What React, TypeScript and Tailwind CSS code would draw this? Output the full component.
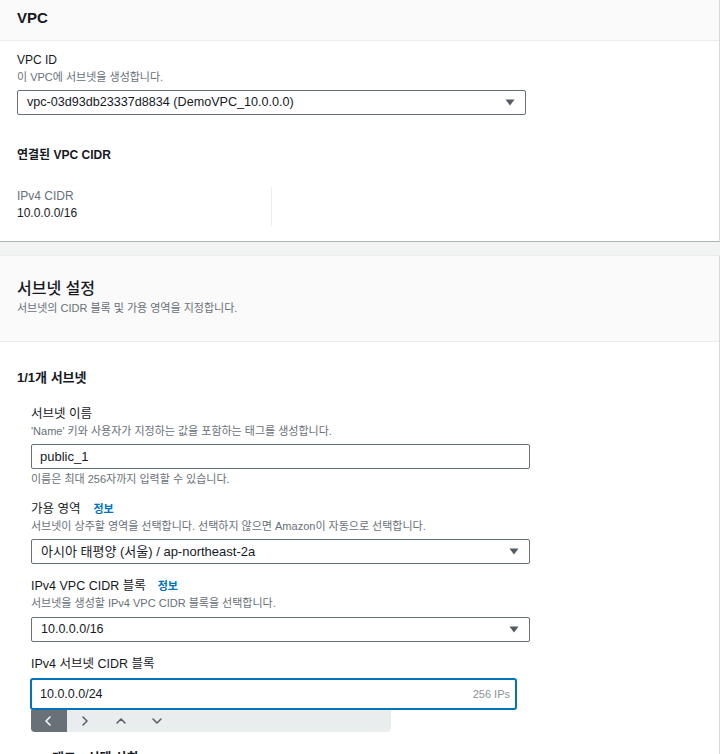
import React from "react";

const Caret = () => (
  <svg width="10" height="7" viewBox="0 0 10 7" className="shrink-0">
    <path d="M0.5 0.5 H9.5 L5 6.5 Z" fill="#545b64" />
  </svg>
);

const Chevron = ({ dir, color }: { dir: "l" | "r" | "u" | "d"; color: string }) => {
  const d =
    dir === "l"
      ? "M7 2 L3 6 L7 10"
      : dir === "r"
      ? "M4 2 L8 6 L4 10"
      : dir === "u"
      ? "M2 8 L6 4 L10 8"
      : "M2 4 L6 8 L10 4";
  return (
    <svg width="12" height="12" viewBox="0 0 12 12">
      <path d={d} fill="none" stroke={color} strokeWidth="1.5" strokeLinecap="round" strokeLinejoin="round" />
    </svg>
  );
};

const Select = ({ value, width, size = "text-[12.6px]" }: { value: string; width: string; size?: string }) => (
  <div
    className={`${width} h-[25px] border border-[#687078] rounded-[2px] bg-white flex items-center justify-between pl-[9px] pr-[10px]`}
  >
    <span className={`${size} text-[#16191f] leading-none`}>{value}</span>
    <Caret />
  </div>
);

export default function App() {
  return (
    <div
      className="w-[720px] h-[754px] overflow-hidden bg-[#f2f3f3] text-[#16191f]"
      style={{ fontFamily: '"Liberation Sans", "Noto Sans CJK KR", Arial, sans-serif' }}
    >
      {/* VPC panel */}
      <div className="bg-white border-r border-[#d5dbdb] border-b border-b-[#aab7b8] w-[720px]">
        <div className="h-[41px] bg-[#fafafa] border-b border-[#eaeded] px-[17px] pt-[8px]">
          <div className="text-[15px] font-bold leading-[20px]">VPC</div>
        </div>
        <div className="px-[17px] pt-[11px] pb-[15px]">
          <div className="text-[12px] leading-[17px]">VPC ID</div>
          <div className="text-[11px] leading-[17px] text-[#687078]">이 VPC에 서브넷을 생성합니다.</div>
          <div className="mt-[4px]">
            <Select value="vpc-03d93db23337d8834 (DemoVPC_10.0.0.0)" width="w-[509px]" />
          </div>
          <div className="mt-[31px] text-[12px] font-bold leading-[18px]">연결된 VPC CIDR</div>
          <div className="mt-[23px] flex">
            <div className="w-[255px] h-[39px] border-r border-[#eaeded] pt-[1px]">
              <div className="text-[12px] leading-[17px] text-[#687078]">IPv4 CIDR</div>
              <div className="text-[12px] leading-[17px]">10.0.0.0/16</div>
            </div>
          </div>
        </div>
      </div>

      {/* Subnet settings panel */}
      <div className="mt-[13px] bg-white border-t border-[#eaeded] border-r border-r-[#d5dbdb] w-[720px] h-[600px]">
        <div className="h-[86px] bg-[#fafafa] border-b border-[#eaeded] px-[17px] pt-[22px]">
          <div className="text-[16px] font-medium leading-[22px]">서브넷 설정</div>
          <div className="text-[11px] leading-[17px] text-[#687078]">서브넷의 CIDR 블록 및 가용 영역을 지정합니다.</div>
        </div>
        <div className="px-[17px] pt-[27px]">
          <div className="text-[13px] font-bold leading-[18px]">1/1개 서브넷</div>
          <div className="pl-[14px]">
            <div className="mt-[18px] text-[12.5px] leading-[18px]">서브넷 이름</div>
            <div className="text-[11px] leading-[17px] text-[#687078]">'Name' 키와 사용자가 지정하는 값을 포함하는 태그를 생성합니다.</div>
            <div className="mt-[4px] w-[499px] h-[25px] border border-[#687078] rounded-[2px] flex items-center pl-[8px]">
              <span className="text-[13px] leading-none">public_1</span>
            </div>
            <div className="mt-[2px] text-[11px] leading-[16px] text-[#687078]">이름은 최대 256자까지 입력할 수 있습니다.</div>

            <div className="mt-[14px] flex items-baseline text-[12.5px] leading-[17px]">
              <span>가용 영역</span>
              <span className="ml-[13px] text-[11px] font-bold text-[#0073bb]">정보</span>
            </div>
            <div className="text-[11px] leading-[16px] text-[#687078]">
              서브넷이 상주할 영역을 선택합니다. 선택하지 않으면 Amazon이 자동으로 선택합니다.
            </div>
            <div className="mt-[5px]">
              <Select value="아시아 태평양 (서울) / ap-northeast-2a" width="w-[499px]" size="text-[13px]" />
            </div>

            <div className="mt-[14px] flex items-baseline text-[12.5px] leading-[17px]">
              <span>IPv4 VPC CIDR 블록</span>
              <span className="ml-[12px] text-[11px] font-bold text-[#0073bb]">정보</span>
            </div>
            <div className="text-[11px] leading-[17px] text-[#687078]">서브넷을 생성할 IPv4 VPC CIDR 블록을 선택합니다.</div>
            <div className="mt-[5px]">
              <Select value="10.0.0.0/16" width="w-[499px]" size="text-[12.5px]" />
            </div>

            <div className="mt-[14px] text-[12.5px] leading-[17px]">IPv4 서브넷 CIDR 블록</div>
            <div className="mt-[5px] -ml-[1px] w-[487px] h-[32px] border-2 border-[#0073bb] rounded-[3px] flex items-center justify-between pl-[8px] pr-[5px]">
              <span className="text-[12.5px] leading-none">10.0.0.0/24</span>
              <span className="text-[11px] leading-none text-[#879596]">256 IPs</span>
            </div>
            <div className="w-[360px] h-[22px] bg-[#eaeded] rounded-b-[4px] flex">
              <div className="w-[36px] h-full bg-[#687078] rounded-bl-[4px] flex items-center justify-center">
                <Chevron dir="l" color="#ffffff" />
              </div>
              <div className="w-[36px] h-full flex items-center justify-center">
                <Chevron dir="r" color="#545b64" />
              </div>
              <div className="w-[36px] h-full flex items-center justify-center">
                <Chevron dir="u" color="#545b64" />
              </div>
              <div className="w-[36px] h-full flex items-center justify-center">
                <Chevron dir="d" color="#545b64" />
              </div>
            </div>
            <div className="mt-[17px] pl-[21px] text-[13px] font-bold leading-[18px]">태그 - 선택 사항</div>
          </div>
        </div>
      </div>
    </div>
  );
}
